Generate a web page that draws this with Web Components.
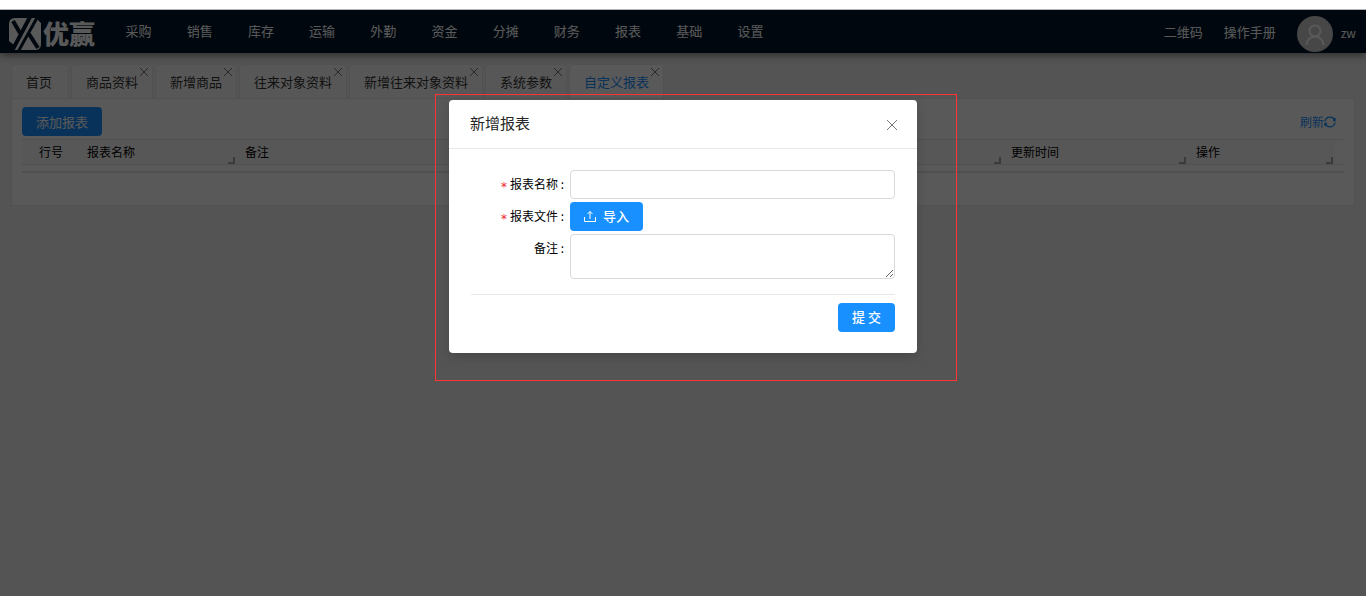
<!DOCTYPE html>
<html lang="zh-CN">
<head>
<meta charset="utf-8">
<title>自定义报表</title>
<style>
html, body { margin: 0; height: 100%; }
body { font-family: "Noto Sans CJK SC", "Noto Sans", sans-serif; font-size: 13px; line-height: 20px; color: #000; background: #fff; }
</style>
</head>
<body>
<report-app></report-app>
<script>
const define = (name, html, setup) => customElements.define(name, class extends HTMLElement {
  constructor() {
    super();
    const t = document.createElement('template');
    t.innerHTML = html;
    this.attachShadow({ mode: 'open' }).append(t.content.cloneNode(true));
  }
  connectedCallback() { if (setup) setup(this, this.shadowRoot); }
});

define('app-logo', `
<style>
:host { display: flex; align-items: center; gap: 2px; color: #fff; }
svg { width: 32px; height: 32px; }
span { font-size: 26px; line-height: 30px; padding-bottom: 2px; font-weight: 900; }
</style>
<svg viewBox="0 0 32 32" aria-hidden="true">
<path fill="#fff" d="M6 0H32V26Q32 32 26 32H0V6Q0 0 6 0Z"/>
<g fill="none" stroke="#001529" stroke-width="3">
<path d="M4 3L11 15M21 -1L3 33" stroke-width="4"/>
<path d="M29 -2L9 34"/>
<path d="M20 16L29 30" stroke-width="4"/>
</g>
<path fill="#001529" d="M0 23L5 27L3 32H0ZM27 0H32V5Z"/>
</svg>
<span>优赢</span>`);

define('user-avatar', `
<style>
:host { display: block; width: 36px; height: 36px; border-radius: 50%; background: #ccc; }
svg { display: block; width: 36px; height: 36px; fill: none; stroke: #fff; stroke-width: 2; }
</style>
<svg viewBox="0 0 36 36" aria-hidden="true"><circle cx="18" cy="15" r="5.5"/><path d="M9.5 29a8.5 8.5 0 0 1 17 0"/></svg>`);

define('top-nav', `
<style>
:host { display: flex; align-items: center; height: 43px; padding: 0 10px 0 9px; box-sizing: border-box; background: #001529; color: #fff; box-shadow: 0 2px 8px rgba(0,0,0,.5); position: relative; }
app-logo { width: 99px; margin-top: 5px; }
nav { display: grid; grid-template-columns: repeat(11, 1fr); width: 673px; padding-bottom: 2px; text-align: center; }
a { color: inherit; text-decoration: none; white-space: nowrap; }
.user { margin-left: auto; display: flex; align-items: center; gap: 21px; }
.who { display: flex; align-items: center; gap: 8px; margin-top: 5px; font-size: 12px; }
.who span { padding-bottom: 2px; }
</style>
<app-logo></app-logo>
<nav></nav>
<div class="user"><a href="#">二维码</a><a href="#">操作手册</a><div class="who"><user-avatar></user-avatar><span>zw</span></div></div>`,
(el, root) => {
  root.querySelector('nav').innerHTML = '采购 销售 库存 运输 外勤 资金 分摊 财务 报表 基础 设置'.split(' ').map(t => `<a href="#">${t}</a>`).join('');
});

define('page-tab', `
<style>
:host { display: block; position: relative; height: 33px; box-sizing: border-box; padding: 7px 14px 6px; background: #fafafa; border-radius: 4px 4px 0 0; box-shadow: 0 0 1px 1px #e8e8e8; }
a { color: #333; text-decoration: none; white-space: nowrap; }
:host([active]) { background: #fff; }
:host([active]) a { color: #1890ff; }
button { position: absolute; top: 2px; right: 3px; width: 10px; height: 10px; padding: 0; border: 0; background: none; }
svg { display: block; width: 10px; height: 10px; stroke: #777; fill: none; }
:host([fixed]) { padding-right: 16px; }
:host([fixed]) button { display: none; }
</style>
<a href="#"><slot></slot></a>
<button type="button" aria-label="关闭"><svg viewBox="0 0 10 10"><path d="M1 1L9 9M9 1L1 9"/></svg></button>`);

define('page-tabs', `
<style>
:host { display: flex; gap: 4px; padding: 12px 12px 0; }
</style><slot></slot>`);

define('report-card', `
<style>
:host { display: block; margin: 1px 12px 0; padding: 8px 10px 32px; background: #fff; box-shadow: 0 0 0 1px #e8e8e8; }
.bar { display: flex; justify-content: space-between; align-items: center; padding-right: 8px; margin-bottom: 3px; }
.bar button { width: 80px; height: 29px; padding: 0; border: 0; border-radius: 4px; background: #1890ff; color: #fff; font: inherit; }
.bar a { display: flex; align-items: center; color: #1890ff; font-size: 12px; text-decoration: none; }
.bar svg { width: 12px; height: 12px; fill: none; stroke: currentColor; stroke-width: 1.3; }
table { width: 100%; table-layout: fixed; border-collapse: collapse; font-size: 12px; border-top: 1px solid #e4e4e4; }
th { position: relative; height: 24px; padding: 0 8px; text-align: left; font-weight: 400; background: #fafafa; border-bottom: 1px solid #e4e4e4; }
th:first-child { padding-left: 17px; }
th:last-child { background: none; padding: 0; }
i { position: absolute; right: 2px; bottom: 0; width: 5px; height: 5px; border: solid #aaa; border-width: 0 2px 2px 0; }
.end { height: 6px; border-bottom: 2px solid #e4e4e4; }
</style>
<div class="bar"><button type="button">添加报表</button>
<a href="#">刷新<svg viewBox="0 0 12 12" aria-hidden="true"><path d="M1 5.500a5 5 0 0 1 9.500-1.500M11 6.500a5 5 0 0 1-9.500 1.500M11 2v2.500h-2M1 10v-2.500h2"/></svg></a></div>
<table>
<colgroup><col style="width:57px"><col style="width:158px"><col><col style="width:185px"><col style="width:147px"><col style="width:9px"></colgroup>
<thead><tr><th>行号</th><th>报表名称<i></i></th><th>备注<i></i></th><th>更新时间<i></i></th><th>操作<i></i></th><th></th></tr></thead>
</table>
<div class="end"></div>`);

define('primary-button', `
<style>
:host { display: inline-block; }
button { display: flex; align-items: center; gap: 7px; height: 29px; padding: 0 14px 2px; border: 0; border-radius: 4px; background: #1890ff; color: #fff; font: inherit; font-weight: 500; white-space: nowrap; }
</style>
<button type="button"><slot name="icon"></slot><slot></slot></button>`);

define('report-dialog', `
<style>
:host { display: block; position: relative; width: 468px; background: #fff; border-radius: 4px; box-shadow: 0 4px 12px rgba(0,0,0,.15); }
:host::after { content: ""; position: absolute; inset: -6px -40px -28px -14px; border: 1px solid #ff3333; pointer-events: none; }
header { display: flex; align-items: center; justify-content: space-between; height: 48px; padding: 0 20px 0 21px; border-bottom: 1px solid #e8e8e8; }
h2 { margin: 0; padding-bottom: 2px; font-size: 15px; font-weight: 400; color: #262626; }
header button { width: 10px; height: 12px; padding: 0; border: 0; background: none; margin-top: 2px; }
header svg { display: block; width: 10px; height: 12px; fill: none; stroke: #777; }
form { display: grid; grid-template-columns: 93px 1fr; column-gap: 6px; row-gap: 3px; padding: 21px 22px; font-size: 12px; }
label { height: 29px; line-height: 27px; text-align: right; white-space: nowrap; }
b { color: #f5222d; font-family: "DejaVu Sans", sans-serif; line-height: 12px; font-weight: 400; vertical-align: -2px; margin-right: 3px; }
input, textarea { display: block; width: 100%; box-sizing: border-box; margin: 0; border: 1px solid #d9d9d9; border-radius: 4px; background: #fff; padding: 4px 8px; font: inherit; outline: 0; }
input { height: 29px; }
textarea { height: 45px; resize: vertical; }
primary-button { font-size: 13px; }
primary-button svg { width: 12px; height: 12px; fill: none; stroke: currentColor; }
footer { grid-column: 1 / -1; display: flex; justify-content: flex-end; margin-top: 12px; padding-top: 8px; border-top: 1px solid #e8e8e8; }
</style>
<header><h2>新增报表</h2><button type="button" aria-label="关闭"><svg viewBox="0 0 10 12"><path d="M0 1L10 11M10 1L0 11"/></svg></button></header>
<form>
<label for="name"><b>*</b>报表名称 :</label><input id="name" type="text">
<label id="file"><b>*</b>报表文件 :</label><div><primary-button aria-labelledby="file"><svg slot="icon" viewBox="0 0 12 12" aria-hidden="true"><path d="M0.500 7V11.500H11.500V7M6 9V1.500M3.500 4L6 1.500L8.500 4"/></svg>导入</primary-button></div>
<label for="note">备注 :</label><textarea id="note"></textarea>
<footer><primary-button>提 交</primary-button></footer>
</form>`);

define('report-app', `
<style>
:host { display: flex; flex-direction: column; min-height: 100%; }
.strip { position: relative; z-index: 1; height: 9px; background: #fff; border-bottom: 1px solid #b4b4bc; }
main { position: relative; flex: 1; background: #f0f0f3; }
.mask { position: absolute; inset: 0; display: flex; justify-content: center; align-items: flex-start; padding-top: 90px; background: rgba(0,0,0,.65); }
</style>
<div class="strip"></div>
<main>
<top-nav></top-nav>
<page-tabs><page-tab fixed>首页</page-tab><page-tab>商品资料</page-tab><page-tab>新增商品</page-tab><page-tab>往来对象资料</page-tab><page-tab>新增往来对象资料</page-tab><page-tab>系统参数</page-tab><page-tab active>自定义报表</page-tab></page-tabs>
<report-card></report-card>
<div class="mask"><report-dialog role="dialog"></report-dialog></div>
</main>`);
</script>
</body>
</html>
